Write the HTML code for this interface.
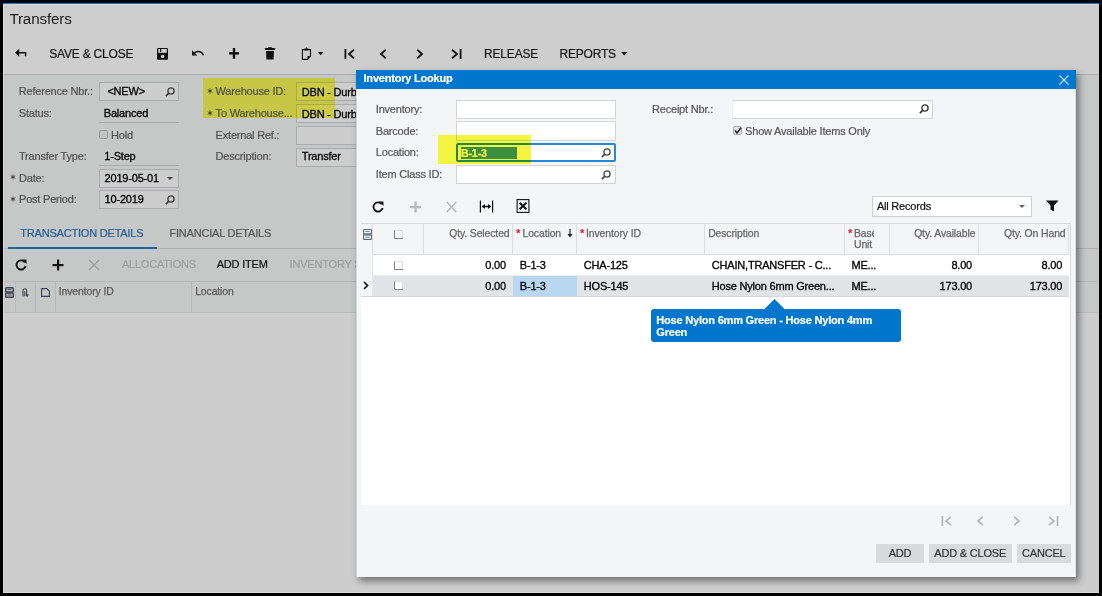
<!DOCTYPE html>
<html><head><meta charset="utf-8"><style>
html,body{margin:0;padding:0;}
body{width:1102px;height:596px;overflow:hidden;position:relative;font-family:"Liberation Sans",sans-serif;background:#000}
body>div,body>svg{position:absolute;}
.t{line-height:20px;white-space:nowrap;-webkit-text-stroke:0.2px currentColor;}
</style></head><body>
<div style="left:0px;top:0px;width:1102px;height:596px;background:#000"></div>
<div style="left:3px;top:3px;width:1096px;height:590px;background:#cecece"></div>
<div style="left:3px;top:3px;width:1096px;height:1px;background:#0a78d0"></div>
<div style="left:3px;top:4px;width:1096px;height:1px;background:#dcd6d0"></div>
<div style="left:3px;top:5px;width:1px;height:588px;background:#dadada"></div>
<div style="left:4px;top:74px;width:1095px;height:1px;background:#aaabac"></div>
<div style="left:4px;top:75px;width:1095px;height:518px;background:#c6c7c7"></div>
<div class="t" style="top:9.25px;font-size:15.2px;color:#1c1c1c;letter-spacing:-0.15px;left:9.40px;-webkit-text-stroke:0">Transfers</div>
<svg style="left:14px;top:48px" width="14" height="10" viewBox="0 0 14 10"><path d="M1 4.8 L5.2 0.8 V3.9 H12.3 V8.3 H10.9 V5.6 H5.2 V8.8 Z" fill="#111"/></svg>
<div class="t" style="top:44.25px;font-size:12px;color:#161616;letter-spacing:-0.2px;left:49.20px;">SAVE &amp; CLOSE</div>
<svg style="left:157px;top:48px" width="11" height="12" viewBox="0 0 11 12"><rect x="0" y="0" width="11" height="11.8" rx="1.2" fill="#111"/><rect x="1.3" y="1" width="8.4" height="3.8" fill="#d4d4d4"/><rect x="3" y="1" width="1.3" height="2.9" rx="0.5" fill="#111"/><circle cx="5.6" cy="8.4" r="1.7" fill="#d4d4d4"/></svg>
<svg style="left:192px;top:50.3px" width="12.2" height="5.8" viewBox="2 7 20.5 9.3"><path d="M12.5 8c-2.65 0-5.05.99-6.9 2.6L2 7v9h9l-3.62-3.62c1.39-1.160 3.16-1.88 5.12-1.88 3.54 0 6.55 2.31 7.6 5.5l2.37-.78C21.08 11.03 17.15 8 12.5 8z" fill="#111"/></svg>
<svg style="left:229px;top:48px" width="10" height="11" viewBox="0 0 10 11"><rect x="3.8" y="0" width="2.4" height="10.7" fill="#111"/><rect x="0" y="4.15" width="10" height="2.4" fill="#111"/></svg>
<svg style="left:264px;top:47px" width="12" height="13" viewBox="0 0 12 13"><rect x="4.2" y="0.2" width="3.6" height="1.3" fill="#111"/><rect x="0.9" y="1" width="10.2" height="2" rx="0.4" fill="#111"/><path d="M2.1 3.9 H9.9 L9.6 12.4 H2.4 Z" fill="#111"/></svg>
<svg style="left:301px;top:47px" width="11" height="13" viewBox="0 0 11 13"><path d="M1.4 2.6 H9.5 V9.2 L6.6 12.4 H1.4 Z" fill="none" stroke="#111" stroke-width="1.1"/><rect x="3.4" y="1.6" width="4.2" height="1.8" fill="#111"/><circle cx="5.5" cy="1.2" r="0.8" fill="#111"/><path d="M9.6 9.1 L6.5 12.5 V9.1 Z" fill="#111"/></svg>
<svg style="left:318px;top:51.8px" width="6" height="4" viewBox="0 0 6 4"><path d="M0 0 H5.5 L2.75 3.2 Z" fill="#111"/></svg>
<svg style="left:344px;top:49px" width="11" height="10" viewBox="0 0 11 10"><rect x="0.5" y="0" width="1.8" height="10" fill="#111"/><path d="M10 0.8 L5 5 L10 9.2" fill="none" stroke="#111" stroke-width="1.8"/></svg>
<svg style="left:379px;top:49px" width="8" height="10" viewBox="0 0 8 10"><path d="M6.8 0.8 L2 5 L6.8 9.2" fill="none" stroke="#111" stroke-width="1.8"/></svg>
<svg style="left:416px;top:49px" width="8" height="10" viewBox="0 0 8 10"><path d="M1.2 0.8 L6 5 L1.2 9.2" fill="none" stroke="#111" stroke-width="1.8"/></svg>
<svg style="left:451px;top:49px" width="11" height="10" viewBox="0 0 11 10"><path d="M1 0.8 L6 5 L1 9.2" fill="none" stroke="#111" stroke-width="1.8"/><rect x="8.7" y="0" width="1.8" height="10" fill="#111"/></svg>
<div class="t" style="top:44.25px;font-size:12px;color:#161616;letter-spacing:-0.2px;left:484.10px;">RELEASE</div>
<div class="t" style="top:44.25px;font-size:12px;color:#161616;letter-spacing:-0.2px;left:559.50px;">REPORTS</div>
<svg style="left:621px;top:52px" width="7" height="4" viewBox="0 0 7 4"><path d="M0 0 H6.5 L3.25 3.5 Z" fill="#111"/></svg>
<div class="t" style="top:81.1px;font-size:11px;color:#505050;letter-spacing:-0.2px;left:18.80px;">Reference Nbr.:</div>
<div style="left:99px;top:82px;width:80px;height:19px;border:1px solid #aaabac;box-sizing:border-box;background:#cdcdcd"></div>
<div class="t" style="top:81.1px;font-size:11px;color:#000;letter-spacing:-0.2px;left:107.40px;-webkit-text-stroke:0.3px currentColor;">&lt;NEW&gt;</div>
<svg style="left:165px;top:87px" width="10" height="10" viewBox="0 0 10 10"><circle cx="6" cy="4" r="3.1" fill="none" stroke="#3a3a3a" stroke-width="1.3"/><path d="M3.8 6.2 L0.9 9.1" stroke="#3a3a3a" stroke-width="1.7"/></svg>
<div class="t" style="top:102.9px;font-size:11px;color:#505050;letter-spacing:-0.2px;left:18.80px;">Status:</div>
<div class="t" style="top:102.9px;font-size:11px;color:#000;letter-spacing:-0.2px;left:103.80px;-webkit-text-stroke:0.3px currentColor;">Balanced</div>
<div style="left:99px;top:122px;width:80px;height:1px;background:#aaabac"></div>
<div style="left:99px;top:130px;width:9px;height:9px;border:1px solid #9c9d9e;box-sizing:border-box;background:#c2c3c3;border-radius:2px"></div>
<div class="t" style="top:125.0px;font-size:11px;color:#505050;letter-spacing:-0.2px;left:111.00px;">Hold</div>
<div class="t" style="top:146.3px;font-size:11px;color:#505050;letter-spacing:-0.2px;left:19.00px;">Transfer Type:</div>
<div class="t" style="top:146.3px;font-size:11px;color:#000;letter-spacing:-0.2px;left:104.30px;-webkit-text-stroke:0.3px currentColor;">1-Step</div>
<div style="left:99px;top:165px;width:80px;height:1px;background:#aaabac"></div>
<svg style="left:10.2px;top:174.1px" width="6" height="6" viewBox="0 0 6 6"><path d="M3 0.4 V5.6 M0.75 1.7 L5.25 4.3 M5.25 1.7 L0.75 4.3" stroke="#2a2a2a" stroke-width="0.75"/></svg>
<div class="t" style="top:168.2px;font-size:11px;color:#505050;letter-spacing:-0.2px;left:19.00px;">Date:</div>
<div style="left:99px;top:169px;width:80px;height:19px;border:1px solid #aaabac;box-sizing:border-box;background:#cdcdcd"></div>
<div class="t" style="top:168.2px;font-size:11px;color:#000;letter-spacing:-0.2px;left:104.60px;-webkit-text-stroke:0.3px currentColor;">2019-05-01</div>
<svg style="left:167px;top:177px" width="6" height="4" viewBox="0 0 6 4"><path d="M0 0 H6 L3 3 Z" fill="#444"/></svg>
<svg style="left:10.2px;top:196.4px" width="6" height="6" viewBox="0 0 6 6"><path d="M3 0.4 V5.6 M0.75 1.7 L5.25 4.3 M5.25 1.7 L0.75 4.3" stroke="#2a2a2a" stroke-width="0.75"/></svg>
<div class="t" style="top:189.15px;font-size:11px;color:#505050;letter-spacing:-0.2px;left:19.00px;">Post Period:</div>
<div style="left:99px;top:190px;width:80px;height:19px;border:1px solid #aaabac;box-sizing:border-box;background:#cdcdcd"></div>
<div class="t" style="top:189.15px;font-size:11px;color:#000;letter-spacing:-0.2px;left:104.60px;-webkit-text-stroke:0.3px currentColor;">10-2019</div>
<svg style="left:165px;top:195px" width="10" height="10" viewBox="0 0 10 10"><circle cx="6" cy="4" r="3.1" fill="none" stroke="#3a3a3a" stroke-width="1.3"/><path d="M3.8 6.2 L0.9 9.1" stroke="#3a3a3a" stroke-width="1.7"/></svg>
<svg style="left:207.2px;top:88.4px" width="6" height="6" viewBox="0 0 6 6"><path d="M3 0.4 V5.6 M0.75 1.7 L5.25 4.3 M5.25 1.7 L0.75 4.3" stroke="#2a2a2a" stroke-width="0.75"/></svg>
<div class="t" style="top:81.15px;font-size:11px;color:#505050;letter-spacing:-0.2px;left:215.60px;">Warehouse ID:</div>
<div style="left:296px;top:82px;width:64px;height:19px;border:1px solid #aaabac;border-right:0;box-sizing:border-box;background:#cdcdcd"></div>
<div class="t" style="top:81.95px;font-size:11px;color:#000;letter-spacing:-0.2px;left:301.80px;-webkit-text-stroke:0.3px currentColor;">DBN - Durb</div>
<svg style="left:207.2px;top:110.3px" width="6" height="6" viewBox="0 0 6 6"><path d="M3 0.4 V5.6 M0.75 1.7 L5.25 4.3 M5.25 1.7 L0.75 4.3" stroke="#2a2a2a" stroke-width="0.75"/></svg>
<div class="t" style="top:103.0px;font-size:11px;color:#505050;letter-spacing:-0.2px;left:215.60px;">To Warehouse...</div>
<div style="left:296px;top:104px;width:64px;height:19px;border:1px solid #aaabac;border-right:0;box-sizing:border-box;background:#cdcdcd"></div>
<div class="t" style="top:103.8px;font-size:11px;color:#000;letter-spacing:-0.2px;left:301.80px;-webkit-text-stroke:0.3px currentColor;">DBN - Durb</div>
<div class="t" style="top:125.0px;font-size:11px;color:#505050;letter-spacing:-0.2px;left:215.60px;">External Ref.:</div>
<div style="left:296px;top:126px;width:64px;height:19px;border:1px solid #aaabac;border-right:0;box-sizing:border-box;background:#cdcdcd"></div>
<div class="t" style="top:145.75px;font-size:11px;color:#505050;letter-spacing:-0.2px;left:215.60px;">Description:</div>
<div style="left:296px;top:148px;width:64px;height:19px;border:1px solid #aaabac;border-right:0;box-sizing:border-box;background:#cdcdcd"></div>
<div class="t" style="top:145.75px;font-size:11px;color:#000;letter-spacing:-0.2px;left:301.80px;-webkit-text-stroke:0.3px currentColor;">Transfer</div>
<div style="left:203px;top:78px;width:132px;height:40px;background:#cbcb46;mix-blend-mode:darken"></div>
<div style="left:4px;top:248px;width:1095px;height:1px;background:#aeb0b1"></div>
<div style="left:8px;top:247px;width:149px;height:2px;background:#1565a8"></div>
<div class="t" style="top:223.4px;font-size:11px;color:#1a5f9c;letter-spacing:-0.2px;left:20.30px;">TRANSACTION DETAILS</div>
<div class="t" style="top:223.4px;font-size:11px;color:#555;letter-spacing:-0.2px;left:169.40px;">FINANCIAL DETAILS</div>
<svg style="left:15px;top:259px" width="12" height="12" viewBox="0 0 12 12"><path d="M9.8 3.2 A4.6 4.6 0 1 0 10.6 7" fill="none" stroke="#111" stroke-width="1.9"/><path d="M7 0.5 L11.5 0.5 L11.5 5 Z" fill="#111"/></svg>
<svg style="left:52px;top:259px" width="12" height="12" viewBox="0 0 12 12"><rect x="5" y="0.5" width="2.2" height="11" fill="#111"/><rect x="0.5" y="5" width="11" height="2.2" fill="#111"/></svg>
<svg style="left:88px;top:259px" width="12" height="12" viewBox="0 0 12 12"><path d="M1 1 L11 11 M11 1 L1 11" stroke="#9fa0a1" stroke-width="1.4"/></svg>
<div class="t" style="top:254.25px;font-size:11px;color:#9fa0a1;letter-spacing:-0.2px;left:121.90px;">ALLOCATIONS</div>
<div class="t" style="top:254.25px;font-size:11px;color:#111;letter-spacing:-0.2px;left:216.70px;">ADD ITEM</div>
<div class="t" style="top:254.25px;font-size:11px;color:#9fa0a1;letter-spacing:-0.2px;left:289.60px;">INVENTORY SUMMARY</div>
<div style="left:4px;top:281px;width:1095px;height:1px;background:#b7b8b9"></div>
<div style="left:4px;top:312px;width:1095px;height:1px;background:#b8b9bb"></div>
<div style="left:4px;top:282px;width:1095px;height:30px;background:#c6c7c7"></div>
<div style="left:4px;top:313px;width:1095px;height:279px;background:#cdcdcd"></div>
<div style="left:4px;top:592px;width:1095px;height:1px;background:#dadada"></div>
<div style="left:15px;top:282px;width:1px;height:30px;background:#b7b8b9"></div>
<div style="left:35px;top:282px;width:1px;height:30px;background:#b7b8b9"></div>
<div style="left:55px;top:282px;width:1px;height:30px;background:#b7b8b9"></div>
<div style="left:191px;top:282px;width:1px;height:30px;background:#b7b8b9"></div>
<svg style="left:5px;top:287px" width="9" height="11" viewBox="0 0 9 11"><rect x="0.75" y="0.75" width="7.5" height="4.2" rx="0.8" fill="none" stroke="#3c4450" stroke-width="1.5"/><rect x="0.75" y="6" width="7.5" height="4.2" rx="0.8" fill="none" stroke="#3c4450" stroke-width="1.5"/><path d="M2.5 2.6 H6.5 M2.5 8 H6.5" stroke="#3c4450" stroke-width="1"/></svg>
<svg style="left:22px;top:288px" width="7" height="9" viewBox="0 0 7 9"><path d="M1 8.5 V2.5 A1.8 1.8 0 0 1 4.6 2.5 V8 M2.8 8.3 V3.2 M4.6 8 Q6 8.5 6 6" fill="none" stroke="#3c4450" stroke-width="1.1"/></svg>
<svg style="left:41px;top:288px" width="9" height="9" viewBox="0 0 9 9"><path d="M0.6 0.6 H5.8 L8.4 3.2 V8.4 H0.6 Z" fill="none" stroke="#3c4450" stroke-width="1.1"/></svg>
<div class="t" style="top:281.95px;font-size:10.4px;color:#5a5a5a;letter-spacing:-0.1px;left:58.80px;-webkit-text-stroke:0.25px currentColor;">Inventory ID</div>
<div class="t" style="top:281.95px;font-size:10.4px;color:#5a5a5a;letter-spacing:-0.1px;left:195.20px;-webkit-text-stroke:0.25px currentColor;">Location</div>
<div style="left:356px;top:70px;width:720px;height:507px;box-shadow:3px 4px 7px rgba(0,0,0,0.45);background:#f4f5f7"></div>
<div style="left:356px;top:89px;width:1px;height:488px;background:#d2d5da"></div>
<div style="left:1075px;top:89px;width:1px;height:488px;background:#dfe1e5"></div>
<div style="left:356px;top:70px;width:720px;height:19px;background:#0077cc"></div>
<div class="t" style="top:67.95px;font-size:11px;color:#fff;letter-spacing:-0.2px;font-weight:700;left:363.50px;">Inventory Lookup</div>
<svg style="left:1059px;top:75px" width="10" height="10" viewBox="0 0 10 10"><path d="M0.5 0.5 L9.5 9.5 M9.5 0.5 L0.5 9.5" stroke="#b8d7f2" stroke-width="1.3"/></svg>
<div class="t" style="top:99.1px;font-size:11px;color:#555;letter-spacing:-0.2px;left:375.80px;">Inventory:</div>
<div style="left:456px;top:100px;width:160px;height:19px;border:1px solid #d2d3d4;box-sizing:border-box;background:#fff"></div>
<div class="t" style="top:120.9px;font-size:11px;color:#555;letter-spacing:-0.2px;left:375.80px;">Barcode:</div>
<div style="left:456px;top:121px;width:160px;height:20px;border:1px solid #d2d3d4;box-sizing:border-box;background:#fff"></div>
<div class="t" style="top:141.95px;font-size:11px;color:#555;letter-spacing:-0.2px;left:375.80px;">Location:</div>
<div style="left:456px;top:143px;width:160px;height:19px;border:2px solid #2a86d6;border-radius:2px;box-sizing:border-box;background:#fff"></div>
<div class="t" style="top:163.95px;font-size:11px;color:#555;letter-spacing:-0.2px;left:375.80px;">Item Class ID:</div>
<div style="left:456px;top:165px;width:160px;height:19px;border:1px solid #d2d3d4;box-sizing:border-box;background:#fff"></div>
<svg style="left:600.6px;top:147.7px" width="10" height="10" viewBox="0 0 10 10"><circle cx="6" cy="4" r="3.1" fill="none" stroke="#444" stroke-width="1.3"/><path d="M3.8 6.2 L0.9 9.1" stroke="#444" stroke-width="1.7"/></svg>
<svg style="left:600.6px;top:169.7px" width="10" height="10" viewBox="0 0 10 10"><circle cx="6" cy="4" r="3.1" fill="none" stroke="#444" stroke-width="1.3"/><path d="M3.8 6.2 L0.9 9.1" stroke="#444" stroke-width="1.7"/></svg>
<div style="left:461px;top:146.5px;width:56px;height:12.0px;background:#3a8fff"></div>
<div class="t" style="top:142.5px;font-size:10.6px;color:#fff;letter-spacing:-0.1px;font-weight:700;left:460.90px;">B-1-3</div>
<div style="left:438px;top:135px;width:93px;height:29px;background:#f5f540;mix-blend-mode:darken"></div>
<div class="t" style="top:99.1px;font-size:11px;color:#555;letter-spacing:-0.2px;left:652.00px;">Receipt Nbr.:</div>
<div style="left:732px;top:100px;width:201px;height:19px;border:1px solid #d2d3d4;border-left-color:#eef0f2;box-sizing:border-box;background:#fff"></div>
<svg style="left:919px;top:104px" width="10" height="10" viewBox="0 0 10 10"><circle cx="6" cy="4" r="3.1" fill="none" stroke="#333" stroke-width="1.3"/><path d="M3.8 6.2 L0.9 9.1" stroke="#333" stroke-width="1.7"/></svg>
<div style="left:733px;top:126px;width:9px;height:9px;border:1px solid #a9aaab;box-sizing:border-box;background:#e2e3e4;border-radius:2px"></div>
<svg style="left:734px;top:127px" width="8" height="7" viewBox="0 0 8 7"><path d="M1 3.5 L3 6 L7 0.8" fill="none" stroke="#222" stroke-width="1.5"/></svg>
<div class="t" style="top:120.75px;font-size:11px;color:#555;letter-spacing:-0.2px;left:745.10px;">Show Available Items Only</div>
<svg style="left:372px;top:201px" width="12" height="12" viewBox="0 0 12 12"><path d="M9.8 3.2 A4.6 4.6 0 1 0 10.6 7" fill="none" stroke="#111" stroke-width="1.9"/><path d="M7 0.5 L11.5 0.5 L11.5 5 Z" fill="#111"/></svg>
<svg style="left:410px;top:201px" width="11" height="12" viewBox="0 0 11 12"><rect x="4.4" y="0.5" width="2.3" height="11" fill="#b8b9ba"/><rect x="0" y="4.9" width="11" height="2.3" fill="#b8b9ba"/></svg>
<svg style="left:446px;top:201px" width="11" height="12" viewBox="0 0 11 12"><path d="M0.8 1 L10.2 11 M10.2 1 L0.8 11" stroke="#b3b4b5" stroke-width="1.3"/></svg>
<svg style="left:479px;top:200px" width="15" height="13" viewBox="0 0 15 13"><rect x="0.8" y="0.5" width="1.2" height="12" fill="#111"/><rect x="13" y="0.5" width="1.2" height="12" fill="#111"/><path d="M3 6.5 H12" stroke="#111" stroke-width="1.5"/><path d="M3 6.5 L6 4 V9 Z M12 6.5 L9 4 V9 Z" fill="#111"/></svg>
<svg style="left:516px;top:199px" width="14" height="14" viewBox="0 0 14 14"><rect x="1.1" y="0.6" width="11.8" height="12.8" fill="none" stroke="#111" stroke-width="1.1"/><path d="M3.6 3.8 L10.4 10.2 M10.4 3.8 L3.6 10.2" stroke="#111" stroke-width="2"/></svg>
<div style="left:872px;top:196px;width:160px;height:21px;border:1px solid #cfd0d1;box-sizing:border-box;background:#fff"></div>
<div class="t" style="top:196.2px;font-size:11px;color:#111;letter-spacing:-0.2px;left:876.90px;">All Records</div>
<svg style="left:1019px;top:205px" width="7" height="3" viewBox="0 0 7 3"><path d="M0 0 H6 L3 3 Z" fill="#666"/></svg>
<svg style="left:1046px;top:200px" width="13" height="12" viewBox="0 0 13 12"><path d="M0 0.5 H12.5 L8 5.5 V11.5 L4.5 9.5 V5.5 Z" fill="#111"/></svg>
<div style="left:361px;top:223px;width:710px;height:282px;background:#fff"></div>
<div style="left:361px;top:223px;width:710px;height:31px;background:#f4f5f7"></div>
<div style="left:361px;top:223px;width:710px;height:1px;background:#d9dadb"></div>
<div style="left:361px;top:254px;width:708px;height:1px;background:#dcdde0"></div>
<div style="left:1070px;top:223px;width:1px;height:282px;background:#d9dadb"></div>
<div style="left:361px;top:275px;width:708px;height:1px;background:#eceef0"></div>
<div style="left:361px;top:276px;width:708px;height:20px;background:#e1e3e7"></div>
<div style="left:361px;top:296px;width:708px;height:1px;background:#d5d7da"></div>
<div style="left:513px;top:276px;width:64px;height:20px;background:#b7d8f0"></div>
<div style="left:361px;top:254px;width:11px;height:42px;background:#f4f5f7"></div>
<div style="left:372px;top:254px;width:1px;height:42px;background:#e4e5e7"></div>
<div style="left:372px;top:223px;width:1px;height:31px;background:#dcdde0"></div>
<div style="left:423px;top:223px;width:1px;height:31px;background:#dcdde0"></div>
<div style="left:512px;top:223px;width:1px;height:31px;background:#dcdde0"></div>
<div style="left:576px;top:223px;width:1px;height:31px;background:#dcdde0"></div>
<div style="left:704px;top:223px;width:1px;height:31px;background:#dcdde0"></div>
<div style="left:844px;top:223px;width:1px;height:31px;background:#dcdde0"></div>
<div style="left:889px;top:223px;width:1px;height:31px;background:#dcdde0"></div>
<div style="left:978px;top:223px;width:1px;height:31px;background:#dcdde0"></div>
<div style="left:1068px;top:223px;width:1px;height:31px;background:#dcdde0"></div>
<svg style="left:363px;top:229px" width="9" height="11" viewBox="0 0 9 11"><rect x="0.55" y="0.55" width="7.9" height="4.3" rx="0.4" fill="none" stroke="#5d6b7e" stroke-width="1.1"/><rect x="0.55" y="5.9" width="7.9" height="4.5" rx="0.4" fill="none" stroke="#5d6b7e" stroke-width="1.1"/><path d="M2.3 2.5 H6.7 M2.3 8 H6.7" stroke="#7d8a9a" stroke-width="1"/></svg>
<svg style="left:394px;top:230px" width="9" height="9" viewBox="0 0 9 9"><rect x="0" y="0" width="9" height="9" fill="#f4f5f7"/><path d="M0.5 0 V8.5 H9" fill="none" stroke="#808080" stroke-width="1"/><path d="M0.5 0.5 H8.5 V8" fill="none" stroke="#dedede" stroke-width="1"/></svg>
<div class="t" style="top:224.15px;font-size:10.4px;color:#666;letter-spacing:-0.1px;right:592.50px;-webkit-text-stroke:0.25px currentColor;">Qty. Selected</div>
<div class="t" style="top:223.65px;font-size:10px;color:#e0202a;letter-spacing:-0.2px;font-weight:700;left:516.30px;">*</div>
<div class="t" style="top:224.15px;font-size:10.4px;color:#666;letter-spacing:-0.1px;left:522.50px;-webkit-text-stroke:0.25px currentColor;width:38.5px;overflow:hidden">Location</div>
<svg style="left:567px;top:229px" width="6" height="9" viewBox="0 0 6 9"><path d="M3 0 V7" stroke="#222" stroke-width="1.2"/><path d="M0.5 5 L3 8.5 L5.5 5 Z" fill="#222"/></svg>
<div class="t" style="top:223.65px;font-size:10px;color:#e0202a;letter-spacing:-0.2px;font-weight:700;left:580.30px;">*</div>
<div class="t" style="top:224.15px;font-size:10.4px;color:#666;letter-spacing:-0.1px;left:586.00px;-webkit-text-stroke:0.25px currentColor;">Inventory ID</div>
<div class="t" style="top:224.15px;font-size:10.4px;color:#666;letter-spacing:-0.1px;left:708.20px;-webkit-text-stroke:0.25px currentColor;">Description</div>
<div class="t" style="top:223.6px;font-size:10px;color:#e0202a;letter-spacing:-0.2px;font-weight:700;left:848.20px;">*</div>
<div class="t" style="top:224.1px;font-size:10.4px;color:#666;letter-spacing:-0.1px;left:854.00px;-webkit-text-stroke:0.25px currentColor;width:20px;overflow:hidden">Base</div>
<div class="t" style="top:235.0px;font-size:10.4px;color:#666;letter-spacing:-0.1px;left:854.00px;-webkit-text-stroke:0.25px currentColor;">Unit</div>
<div class="t" style="top:224.15px;font-size:10.4px;color:#666;letter-spacing:-0.1px;right:126.70px;-webkit-text-stroke:0.25px currentColor;">Qty. Available</div>
<div class="t" style="top:224.15px;font-size:10.4px;color:#666;letter-spacing:-0.1px;right:36.50px;-webkit-text-stroke:0.25px currentColor;">Qty. On Hand</div>
<svg style="left:394px;top:260.5px" width="9" height="9" viewBox="0 0 9 9"><rect x="0" y="0" width="9" height="9" fill="#fff"/><path d="M0.5 0 V8.5 H9" fill="none" stroke="#808080" stroke-width="1"/><path d="M0.5 0.5 H8.5 V8" fill="none" stroke="#dedede" stroke-width="1"/></svg>
<svg style="left:394px;top:281px" width="9" height="9" viewBox="0 0 9 9"><rect x="0" y="0" width="9" height="9" fill="#fff"/><path d="M0.5 0 V8.5 H9" fill="none" stroke="#808080" stroke-width="1"/><path d="M0.5 0.5 H8.5 V8" fill="none" stroke="#dedede" stroke-width="1"/></svg>
<svg style="left:363px;top:281px" width="6" height="9" viewBox="0 0 6 9"><path d="M1 1 L4.5 4.5 L1 8" fill="none" stroke="#111" stroke-width="1.7"/></svg>
<div class="t" style="top:255.4px;font-size:11px;color:#000;letter-spacing:-0.2px;right:596.10px;-webkit-text-stroke:0.3px currentColor;">0.00</div>
<div class="t" style="top:255.4px;font-size:11px;color:#000;letter-spacing:-0.2px;left:519.80px;-webkit-text-stroke:0.3px currentColor;">B-1-3</div>
<div class="t" style="top:255.4px;font-size:11px;color:#000;letter-spacing:-0.2px;left:583.80px;-webkit-text-stroke:0.3px currentColor;">CHA-125</div>
<div class="t" style="top:255.4px;font-size:11px;color:#000;letter-spacing:-0.2px;left:711.80px;-webkit-text-stroke:0.3px currentColor;">CHAIN,TRANSFER - C...</div>
<div class="t" style="top:255.4px;font-size:11px;color:#000;letter-spacing:-0.2px;left:851.50px;-webkit-text-stroke:0.3px currentColor;">ME...</div>
<div class="t" style="top:255.4px;font-size:11px;color:#000;letter-spacing:-0.2px;right:130.00px;-webkit-text-stroke:0.3px currentColor;">8.00</div>
<div class="t" style="top:255.4px;font-size:11px;color:#000;letter-spacing:-0.2px;right:39.80px;-webkit-text-stroke:0.3px currentColor;">8.00</div>
<div class="t" style="top:276.4px;font-size:11px;color:#000;letter-spacing:-0.2px;right:596.10px;-webkit-text-stroke:0.3px currentColor;">0.00</div>
<div class="t" style="top:276.4px;font-size:11px;color:#000;letter-spacing:-0.2px;left:519.80px;-webkit-text-stroke:0.3px currentColor;">B-1-3</div>
<div class="t" style="top:276.4px;font-size:11px;color:#000;letter-spacing:-0.2px;left:583.80px;-webkit-text-stroke:0.3px currentColor;">HOS-145</div>
<div class="t" style="top:276.4px;font-size:11px;color:#000;letter-spacing:-0.2px;left:711.80px;-webkit-text-stroke:0.3px currentColor;">Hose Nylon 6mm Green...</div>
<div class="t" style="top:276.4px;font-size:11px;color:#000;letter-spacing:-0.2px;left:851.50px;-webkit-text-stroke:0.3px currentColor;">ME...</div>
<div class="t" style="top:276.4px;font-size:11px;color:#000;letter-spacing:-0.2px;right:130.00px;-webkit-text-stroke:0.3px currentColor;">173.00</div>
<div class="t" style="top:276.4px;font-size:11px;color:#000;letter-spacing:-0.2px;right:39.80px;-webkit-text-stroke:0.3px currentColor;">173.00</div>
<div style="left:651px;top:309px;width:250px;height:33px;background:#0077cc;border-radius:3px"></div>
<svg style="left:764px;top:299px" width="21" height="11" viewBox="0 0 21 11"><path d="M0 10.5 L10.5 0 L21 10.5 Z" fill="#0077cc"/></svg>
<div class="t" style="top:310.4px;font-size:11px;color:#fff;letter-spacing:-0.2px;font-weight:700;left:656.30px;">Hose Nylon 6mm Green - Hose Nylon 4mm</div>
<div class="t" style="top:322.15px;font-size:11px;color:#fff;letter-spacing:-0.2px;font-weight:700;left:656.30px;">Green</div>
<svg style="left:941px;top:516.2px" width="11" height="10" viewBox="0 0 11 10"><rect x="0.5" y="0" width="1.7" height="10" fill="#b3b4b5"/><path d="M10 0.8 L5 5 L10 9.2" fill="none" stroke="#b3b4b5" stroke-width="1.7"/></svg>
<svg style="left:976px;top:516.2px" width="8" height="10" viewBox="0 0 8 10"><path d="M6.8 0.8 L2 5 L6.8 9.2" fill="none" stroke="#b3b4b5" stroke-width="1.7"/></svg>
<svg style="left:1012.5px;top:516.2px" width="8" height="10" viewBox="0 0 8 10"><path d="M1.2 0.8 L6 5 L1.2 9.2" fill="none" stroke="#b3b4b5" stroke-width="1.7"/></svg>
<svg style="left:1048px;top:516.2px" width="11" height="10" viewBox="0 0 11 10"><path d="M1 0.8 L6 5 L1 9.2" fill="none" stroke="#b3b4b5" stroke-width="1.7"/><rect x="8.7" y="0" width="1.7" height="10" fill="#b3b4b5"/></svg>
<div style="left:876px;top:544px;width:48px;height:19px;background:#d9dadb"></div>
<div class="t" style="top:543.1px;font-size:11px;color:#333;letter-spacing:-0.2px;left:888.70px;">ADD</div>
<div style="left:929px;top:544px;width:83px;height:19px;background:#d9dadb"></div>
<div class="t" style="top:543.1px;font-size:11px;color:#333;letter-spacing:-0.2px;left:934.30px;">ADD &amp; CLOSE</div>
<div style="left:1017px;top:544px;width:54px;height:19px;background:#d9dadb"></div>
<div class="t" style="top:543.1px;font-size:11px;color:#333;letter-spacing:-0.2px;left:1022.10px;">CANCEL</div>
</body></html>
